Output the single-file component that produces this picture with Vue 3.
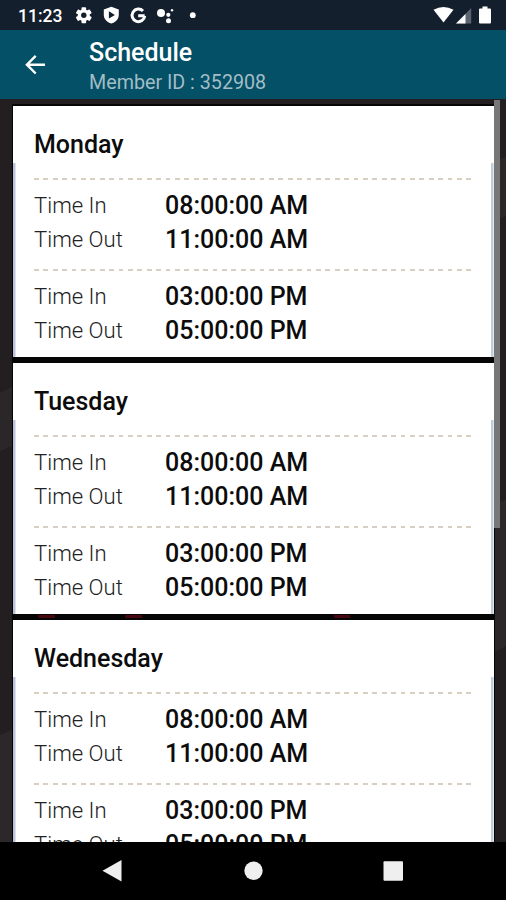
<template>
  <div class="screen">
    <div class="status-bar">
      <span class="clock">11:23</span>
      <svg class="status-left" width="124" height="20" viewBox="0 0 124 20">
        <!-- 设置 -->
        <g transform="translate(9.8 10.2)" fill="#fff">
          <circle r="6" />
          <rect v-for="n in 3" :key="n" x="-2.3" y="-8" width="4.6" height="16" rx="0.8" :transform="`rotate(${n * 60})`" />
          <circle r="2.7" fill="#141f2d" />
        </g>
        <!-- 安全 -->
        <path d="M37.300 1.700l7.500 2.900v5.200c0 4.200-3 7.400-7.500 8.700-4.500-1.300-7.500-4.500-7.500-8.700V4.600z" fill="#fff" />
        <path d="M34.900 6.200l6 3.700-6 3.700z" fill="#141f2d" />
        <path d="M64.200 10.800h6.500M69 6A6.300 6.300 0 1 0 70.700 10.800" fill="none" stroke="#fff" stroke-width="3" />
        <g fill="#fff">
          <circle cx="87" cy="8" r="4" />
          <circle cx="94.300" cy="9.800" r="2.100" />
          <circle cx="94.500" cy="15.700" r="2.500" />
          <circle cx="98" cy="5.300" r="1.200" />
          <circle cx="118.800" cy="10.200" r="2.900" />
        </g>
      </svg>
      <svg class="status-right" width="60" height="20" viewBox="0 0 60 20">
        <path d="M0.500 4.800Q10.500-1 20.500 4.800L10.500 17.500z" fill="#fff" />
        <path d="M38.200 3v15.500H23z" fill="#5b6570" />
        <path d="M32.500 9v9.500H23z" fill="#fff" />
        <path d="M47 3.500h2.500V1.500h5v2H57q1 0 1 1v13q0 1-1 1H47q-1 0-1-1v-13q0-1 1-1z" fill="#fff" />
      </svg>
    </div>

    <div class="app-bar">
      <button class="back-btn">
        <svg width="22" height="22" viewBox="0 0 22 22">
          <path d="M21 10.700H3M11.700 1.900L2.900 10.700l8.800 8.800" fill="none" stroke="#fff" stroke-width="2.400" />
        </svg>
      </button>
      <div class="heading">
        <h1 class="title">Schedule</h1>
        <div class="subtitle">Member ID : {{ memberId }}</div>
      </div>
    </div>

    <div class="content">
      <div v-for="item in schedule" :key="item.day" class="card">
        <h2 class="day">{{ item.day }}</h2>
        <div v-for="(slot, index) in item.slots" :key="index" class="slot">
          <div class="row">
            <span class="label">Time In</span>
            <span class="value">{{ slot.timeIn }}</span>
          </div>
          <div class="row">
            <span class="label">Time Out</span>
            <span class="value">{{ slot.timeOut }}</span>
          </div>
        </div>
      </div>
      <div class="scrollbar"></div>
    </div>

    <div class="nav-bar">
      <svg width="506" height="58" viewBox="0 0 506 58" fill="#efefef">
        <path d="M102.500 28.700L121.500 18v21.500z" />
        <circle cx="253.500" cy="28.700" r="9.200" />
        <rect x="383.500" y="19.300" width="19.500" height="19.500" rx="1" />
      </svg>
    </div>
  </div>
</template>

<script setup>
import { ref } from 'vue'

const memberId = ref('352908')

const slots = [
  { timeIn: '08:00:00 AM', timeOut: '11:00:00 AM' },
  { timeIn: '03:00:00 PM', timeOut: '05:00:00 PM' }
]

const schedule = ref([
  { day: 'Monday', slots },
  { day: 'Tuesday', slots },
  { day: 'Wednesday', slots }
])
</script>

<style>
body {
  margin: 0;
  background: #000;
}
</style>

<style scoped>
.screen {
  width: 506px;
  height: 900px;
  display: flex;
  flex-direction: column;
  overflow: hidden;
  font-family: Roboto, sans-serif;
}

.status-bar {
  height: 30px;
  flex-shrink: 0;
  display: flex;
  align-items: center;
  box-sizing: border-box;
  padding: 0 13.5px 0 18px;
  background: #141f2d;
}

.clock {
  width: 56px;
  color: #fff;
  font-size: 17.5px;
  font-weight: 500;
  line-height: 30px;
  padding-top: 2px;
}

.status-right {
  margin-left: auto;
}

.app-bar {
  height: 69px;
  flex-shrink: 0;
  display: flex;
  background: #045066;
}

.back-btn {
  width: 89px;
  padding: 0 0 0 24px;
  border: none;
  background: none;
  display: flex;
  align-items: center;
  cursor: pointer;
}

.heading {
  padding-top: 8px;
}

.title {
  margin: 0;
  color: #fff;
  font-size: 25px;
  font-weight: 500;
  line-height: 30px;
}

.subtitle {
  color: #a3bdc7;
  font-size: 19.7px;
  line-height: 30px;
}

.content {
  position: relative;
  height: 743px;
  flex-shrink: 0;
  display: flex;
  flex-direction: column;
  gap: 6px;
  overflow: hidden;
  box-sizing: border-box;
  padding: 7px 12px 0 13px;
  background:
    linear-gradient(#45060d, #45060d) 38px 516px / 17px 3px no-repeat,
    linear-gradient(#45060d, #45060d) 125px 516px / 17px 3px no-repeat,
    linear-gradient(#45060d, #45060d) 334px 516px / 16px 3px no-repeat,
    linear-gradient(#050505, #050505) 12px 5px / 483px 100% no-repeat,
    linear-gradient(155deg, #231f20 0 30%, #2b2728 30% 36%, #231f20 36% 65%, #2c2829 65% 80%, #231f20 80%);
}

.card {
  width: 480.5px;
  height: 251px;
  flex-shrink: 0;
  box-sizing: border-box;
  padding: 0 23px 0 21px;
  background:
    linear-gradient(#bcc3d8, #bcc3d8) 0 57px / 2.5px 100% no-repeat,
    linear-gradient(#bfcddd, #bfcddd) 100% 57px / 2.5px 100% no-repeat,
    #fff;
}

.day {
  margin: 0;
  height: 72px;
  color: #0c0c0c;
  font-size: 25px;
  font-weight: 500;
  line-height: 78px;
}

.slot {
  height: 91px;
  box-sizing: border-box;
  padding-top: 11px;
  background: repeating-linear-gradient(90deg, #d8cfc2 0 4.8px, transparent 4.8px 9.4px) 0 0 / 100% 2px no-repeat;
}

.row {
  display: flex;
  height: 33.5px;
  line-height: 33.5px;
}

.label {
  width: 131px;
  color: #222;
  font-size: 22.1px;
  font-weight: 300;
}

.value {
  color: #0c0c0c;
  font-size: 25px;
  font-weight: 500;
  line-height: 34px;
}

/* 滚动条浮在列表之上 */
.scrollbar {
  position: absolute;
  top: 1px;
  right: 6px;
  width: 6px;
  height: 428px;
  background: #787676;
}

.nav-bar {
  height: 58px;
  flex-shrink: 0;
  background: #000;
}
</style>
